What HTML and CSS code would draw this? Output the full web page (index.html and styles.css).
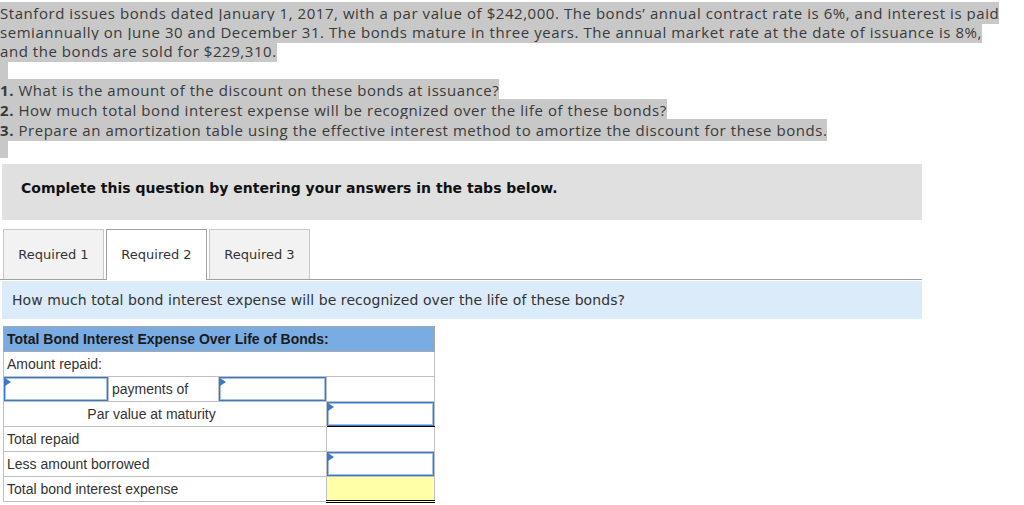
FILE: index.html
```html
<!DOCTYPE html>
<html>
<head>
<meta charset="utf-8">
<link rel="stylesheet" href="styles.css">
</head>
<body>
<div class="intro">
  <div class="line"><span class="hl">Stanford issues bonds dated January 1, 2017, with a par value of $242,000. The bonds’ annual contract rate is 6%, and interest is paid</span></div>
  <div class="line"><span class="hl">semiannually on June 30 and December 31. The bonds mature in three years. The annual market rate at the date of issuance is 8%,</span></div>
  <div class="line"><span class="hl">and the bonds are sold for $229,310.</span></div>
  <div class="blank"></div>
  <div class="line item"><span class="hl"><b>1.</b> What is the amount of the discount on these bonds at issuance?</span></div>
  <div class="line item"><span class="hl"><b>2.</b> How much total bond interest expense will be recognized over the life of these bonds?</span></div>
  <div class="line item"><span class="hl"><b>3.</b> Prepare an amortization table using the effective interest method to amortize the discount for these bonds.</span></div>
  <div class="blank short"></div>
</div>

<div class="notice">Complete this question by entering your answers in the tabs below.</div>

<div class="tabs">
  <div class="tab">Required 1</div>
  <div class="tab active">Required 2</div>
  <div class="tab">Required 3</div>
</div>

<div class="prompt">How much total bond interest expense will be recognized over the life of these bonds?</div>

<table class="grid">
  <colgroup>
    <col class="c1"><col class="c2"><col class="c3"><col class="c4">
  </colgroup>
  <tr class="head"><td colspan="4">Total Bond Interest Expense Over Life of Bonds:</td></tr>
  <tr><td colspan="4">Amount repaid:</td></tr>
  <tr>
    <td class="in"><div class="box"></div></td>
    <td>payments of</td>
    <td class="in"><div class="box"></div></td>
    <td></td>
  </tr>
  <tr class="par">
    <td colspan="3" class="center">Par value at maturity</td>
    <td class="in sum"><div class="box"></div></td>
  </tr>
  <tr><td colspan="3">Total repaid</td><td></td></tr>
  <tr><td colspan="3">Less amount borrowed</td><td class="in"><div class="box"></div></td></tr>
  <tr><td colspan="3">Total bond interest expense</td><td class="total"></td></tr>
</table>
</body>
</html>
```

FILE: styles.css
```css
html, body {
  margin: 0;
  padding: 0;
  background: #fff;
}

.intro {
  padding-top: 4px;
  font-family: "Open Sans", "Lato", sans-serif;
  font-size: 15px;
  letter-spacing: 0.55px;
  color: #3a3a3a;
}

.line {
  height: 19px;
  line-height: 19px;
  white-space: nowrap;
}

.line.item {
  height: 20px;
  line-height: 20px;
}

.hl {
  background: #c8c8c8;
  padding: 1px 0;
}

.hl b {
  font-weight: 700;
}

.blank {
  width: 8px;
  height: 19px;
  background: #c8c8c8;
}

.blank.short {
  height: 18px;
}

.notice {
  margin: 6px 0 0 2px;
  width: 901px;
  height: 56px;
  padding: 0 0 0 19px;
  background: #e0e0e0;
  font-family: "DejaVu Sans", Verdana, sans-serif;
  font-size: 14px;
  font-weight: bold;
  line-height: 48px;
  color: #111;
}

.tabs {
  display: flex;
  gap: 2px;
  margin: 9px 0 0 0;
  padding-left: 3px;
  width: 919px;
  height: 50px;
  border-bottom: 1px solid #a0a0a0;
}

.tab {
  width: 99px;
  height: 49px;
  border: 1px solid #c8c8c8;
  border-bottom: none;
  background: #f2f2f2;
  font-family: "DejaVu Sans", Verdana, sans-serif;
  font-size: 13px;
  line-height: 49px;
  text-align: center;
  color: #333;
}

.tab.active {
  background: #fff;
  border-color: #a0a0a0;
  height: 50px;
  margin-bottom: -1px;
}

.prompt {
  margin: 1px 0 0 2px;
  width: 910px;
  height: 38px;
  padding-left: 10px;
  background: #dbebf9;
  font-family: "DejaVu Sans", Verdana, sans-serif;
  font-size: 14px;
  letter-spacing: 0.07px;
  line-height: 38px;
  color: #333;
}

.grid {
  margin: 7px 0 0 3px;
  border-collapse: collapse;
  table-layout: fixed;
  width: 431px;
  font-family: "Liberation Sans", Arial, sans-serif;
  font-size: 14px;
  color: #333;
}

.c1 { width: 105px; }
.c2 { width: 110px; }
.c3 { width: 108px; }
.c4 { width: 108px; }

.grid td {
  border: 1px solid #c0c0c0;
  height: 24px;
  padding: 0 3px;
  white-space: nowrap;
}

.grid tr.head td {
  background: #7aace4;
  font-weight: bold;
  color: #1a1a1a;
  border-color: #a8a8a8;
}

.grid td.center {
  text-align: center;
  padding-right: 30px;
}

.grid td.in {
  padding: 0;
}

.box {
  height: 22px;
  border: 1px solid #3d78c0;
  box-shadow: inset 0 0 0 1px #9fc0e8;
  position: relative;
  background: #fff;
}

.box::before {
  content: "";
  position: absolute;
  left: 0;
  top: 0;
  border-left: 6px solid #3d78c0;
  border-top: 4px solid transparent;
  border-bottom: 4px solid transparent;
}

.grid td.sum {
  border-bottom: 1px solid #000;
}

.grid td.total {
  background: #ffffa8;
  height: 22px;
  border-bottom: 3px double #000;
}
```
